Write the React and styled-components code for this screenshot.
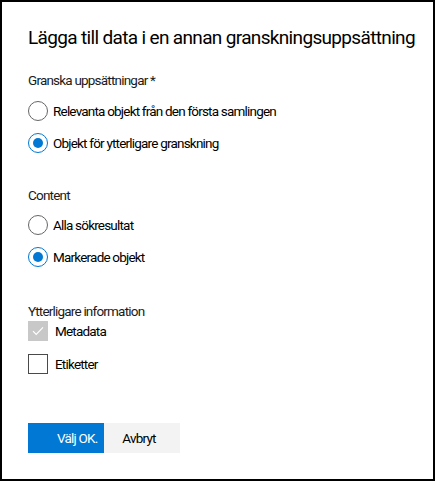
import React, { useState } from 'react';
import styled, { createGlobalStyle } from 'styled-components';

const GlobalStyle = createGlobalStyle`
  html, body {
    margin: 0;
    padding: 0;
    background: #ffffff;
  }
  body {
    font-family: Roboto, "Liberation Sans", Arial, sans-serif;
    color: #000000;
  }
`;

const Dialog = styled.div`
  box-sizing: border-box;
  width: 435px;
  height: 481px;
  border: 2px solid #000000;
  padding: 22px 26px 0 26px;
  display: flex;
  flex-direction: column;
`;

const Title = styled.h1`
  margin: 0;
  font-size: 19px;
  line-height: 28px;
  font-weight: 400;
  letter-spacing: -0.66px;
  color: #000000;
  white-space: nowrap;
`;

const Group = styled.div`
  display: flex;
  flex-direction: column;
  margin-top: ${p => p.$top}px;
`;

const GroupLabel = styled.div`
  font-size: 13.5px;
  line-height: 20px;
  letter-spacing: -0.8px;
  color: #1b1b1b;
  margin-bottom: ${p => p.$gap}px;
`;

const OptionRow = styled.label`
  display: flex;
  align-items: center;
  gap: ${p => p.$space}px;
  height: 20px;
  margin-bottom: ${p => p.$gap}px;
  font-size: 13.5px;
  letter-spacing: -0.8px;
  color: #000000;
  white-space: nowrap;
  cursor: pointer;
`;

const RadioCircle = styled.span`
  box-sizing: border-box;
  width: 20px;
  height: 20px;
  border-radius: 50%;
  border: 1px solid ${p => (p.$checked ? '#0078d4' : '#666666')};
  display: flex;
  align-items: center;
  justify-content: center;
  flex: none;

  &::after {
    content: '';
    width: 10px;
    height: 10px;
    border-radius: 50%;
    background: #0078d4;
    display: ${p => (p.$checked ? 'block' : 'none')};
  }
`;

const CheckBox = styled.span`
  box-sizing: border-box;
  width: 20px;
  height: 20px;
  flex: none;
  border: 1px solid ${p => (p.$disabled ? '#c8c8c8' : '#4a4a4a')};
  background: ${p => (p.$disabled ? '#c8c8c8' : '#ffffff')};
  display: flex;
  align-items: center;
  justify-content: center;
`;

const Footer = styled.div`
  display: flex;
  margin-top: ${p => p.$top}px;
`;

const PrimaryButton = styled.button`
  width: 76px;
  height: 30px;
  border: none;
  background: #0078d4;
  color: #ffffff;
  font-family: inherit;
  font-size: 13.5px;
  letter-spacing: -0.8px;
  white-space: nowrap;
  padding: 0 0 0 29px;
  text-align: left;
  cursor: pointer;
`;

const SecondaryButton = styled.button`
  width: 76px;
  height: 30px;
  border: none;
  background: #f3f3f3;
  color: #000000;
  font-family: inherit;
  font-size: 13.5px;
  letter-spacing: -0.8px;
  white-space: nowrap;
  padding: 0 6px 0 0;
  cursor: pointer;
`;

function Radio({ checked, label, onSelect, gap }) {
  return (
    <OptionRow $gap={gap} $space={5} onClick={onSelect}>
      <RadioCircle $checked={checked} />
      <span>{label}</span>
    </OptionRow>
  );
}

function Check({ checked, disabled, label, onToggle, gap }) {
  return (
    <OptionRow $gap={gap} $space={7} onClick={disabled ? undefined : onToggle}>
      <CheckBox $disabled={disabled}>
        {checked && (
          <svg width="12" height="10" viewBox="0 0 12 10">
            <path d="M1 5.2 L4.2 8.4 L11 1.4" fill="none" stroke="#ffffff" strokeWidth="1.2" />
          </svg>
        )}
      </CheckBox>
      <span>{label}</span>
    </OptionRow>
  );
}

export default function App() {
  const [set, setSet] = useState('extra');
  const [content, setContent] = useState('marked');
  const [labels, setLabels] = useState(false);

  return (
    <>
      <GlobalStyle />
      <Dialog>
        <Title>Lägga till data i en annan granskningsuppsättning</Title>

        <Group $top={18}>
          <GroupLabel $gap={11}>Granska uppsättningar *</GroupLabel>
          <Radio
            label="Relevanta objekt från den första samlingen"
            checked={set === 'first'}
            onSelect={() => setSet('first')}
            gap={12}
          />
          <Radio
            label="Objekt för ytterligare granskning"
            checked={set === 'extra'}
            onSelect={() => setSet('extra')}
            gap={0}
          />
        </Group>

        <Group $top={32}>
          <GroupLabel $gap={10}>Content</GroupLabel>
          <Radio
            label="Alla sökresultat"
            checked={content === 'all'}
            onSelect={() => setContent('all')}
            gap={12}
          />
          <Radio
            label="Markerade objekt"
            checked={content === 'marked'}
            onSelect={() => setContent('marked')}
            gap={0}
          />
        </Group>

        <Group $top={34}>
          <GroupLabel $gap={0}>Ytterligare information</GroupLabel>
          <Check label="Metadata" checked disabled gap={13} />
          <Check label="Etiketter" checked={labels} onToggle={() => setLabels(!labels)} gap={0} />
        </Group>

        <Footer $top={49}>
          <PrimaryButton>Välj OK.</PrimaryButton>
          <SecondaryButton>Avbryt</SecondaryButton>
        </Footer>
      </Dialog>
    </>
  );
}
